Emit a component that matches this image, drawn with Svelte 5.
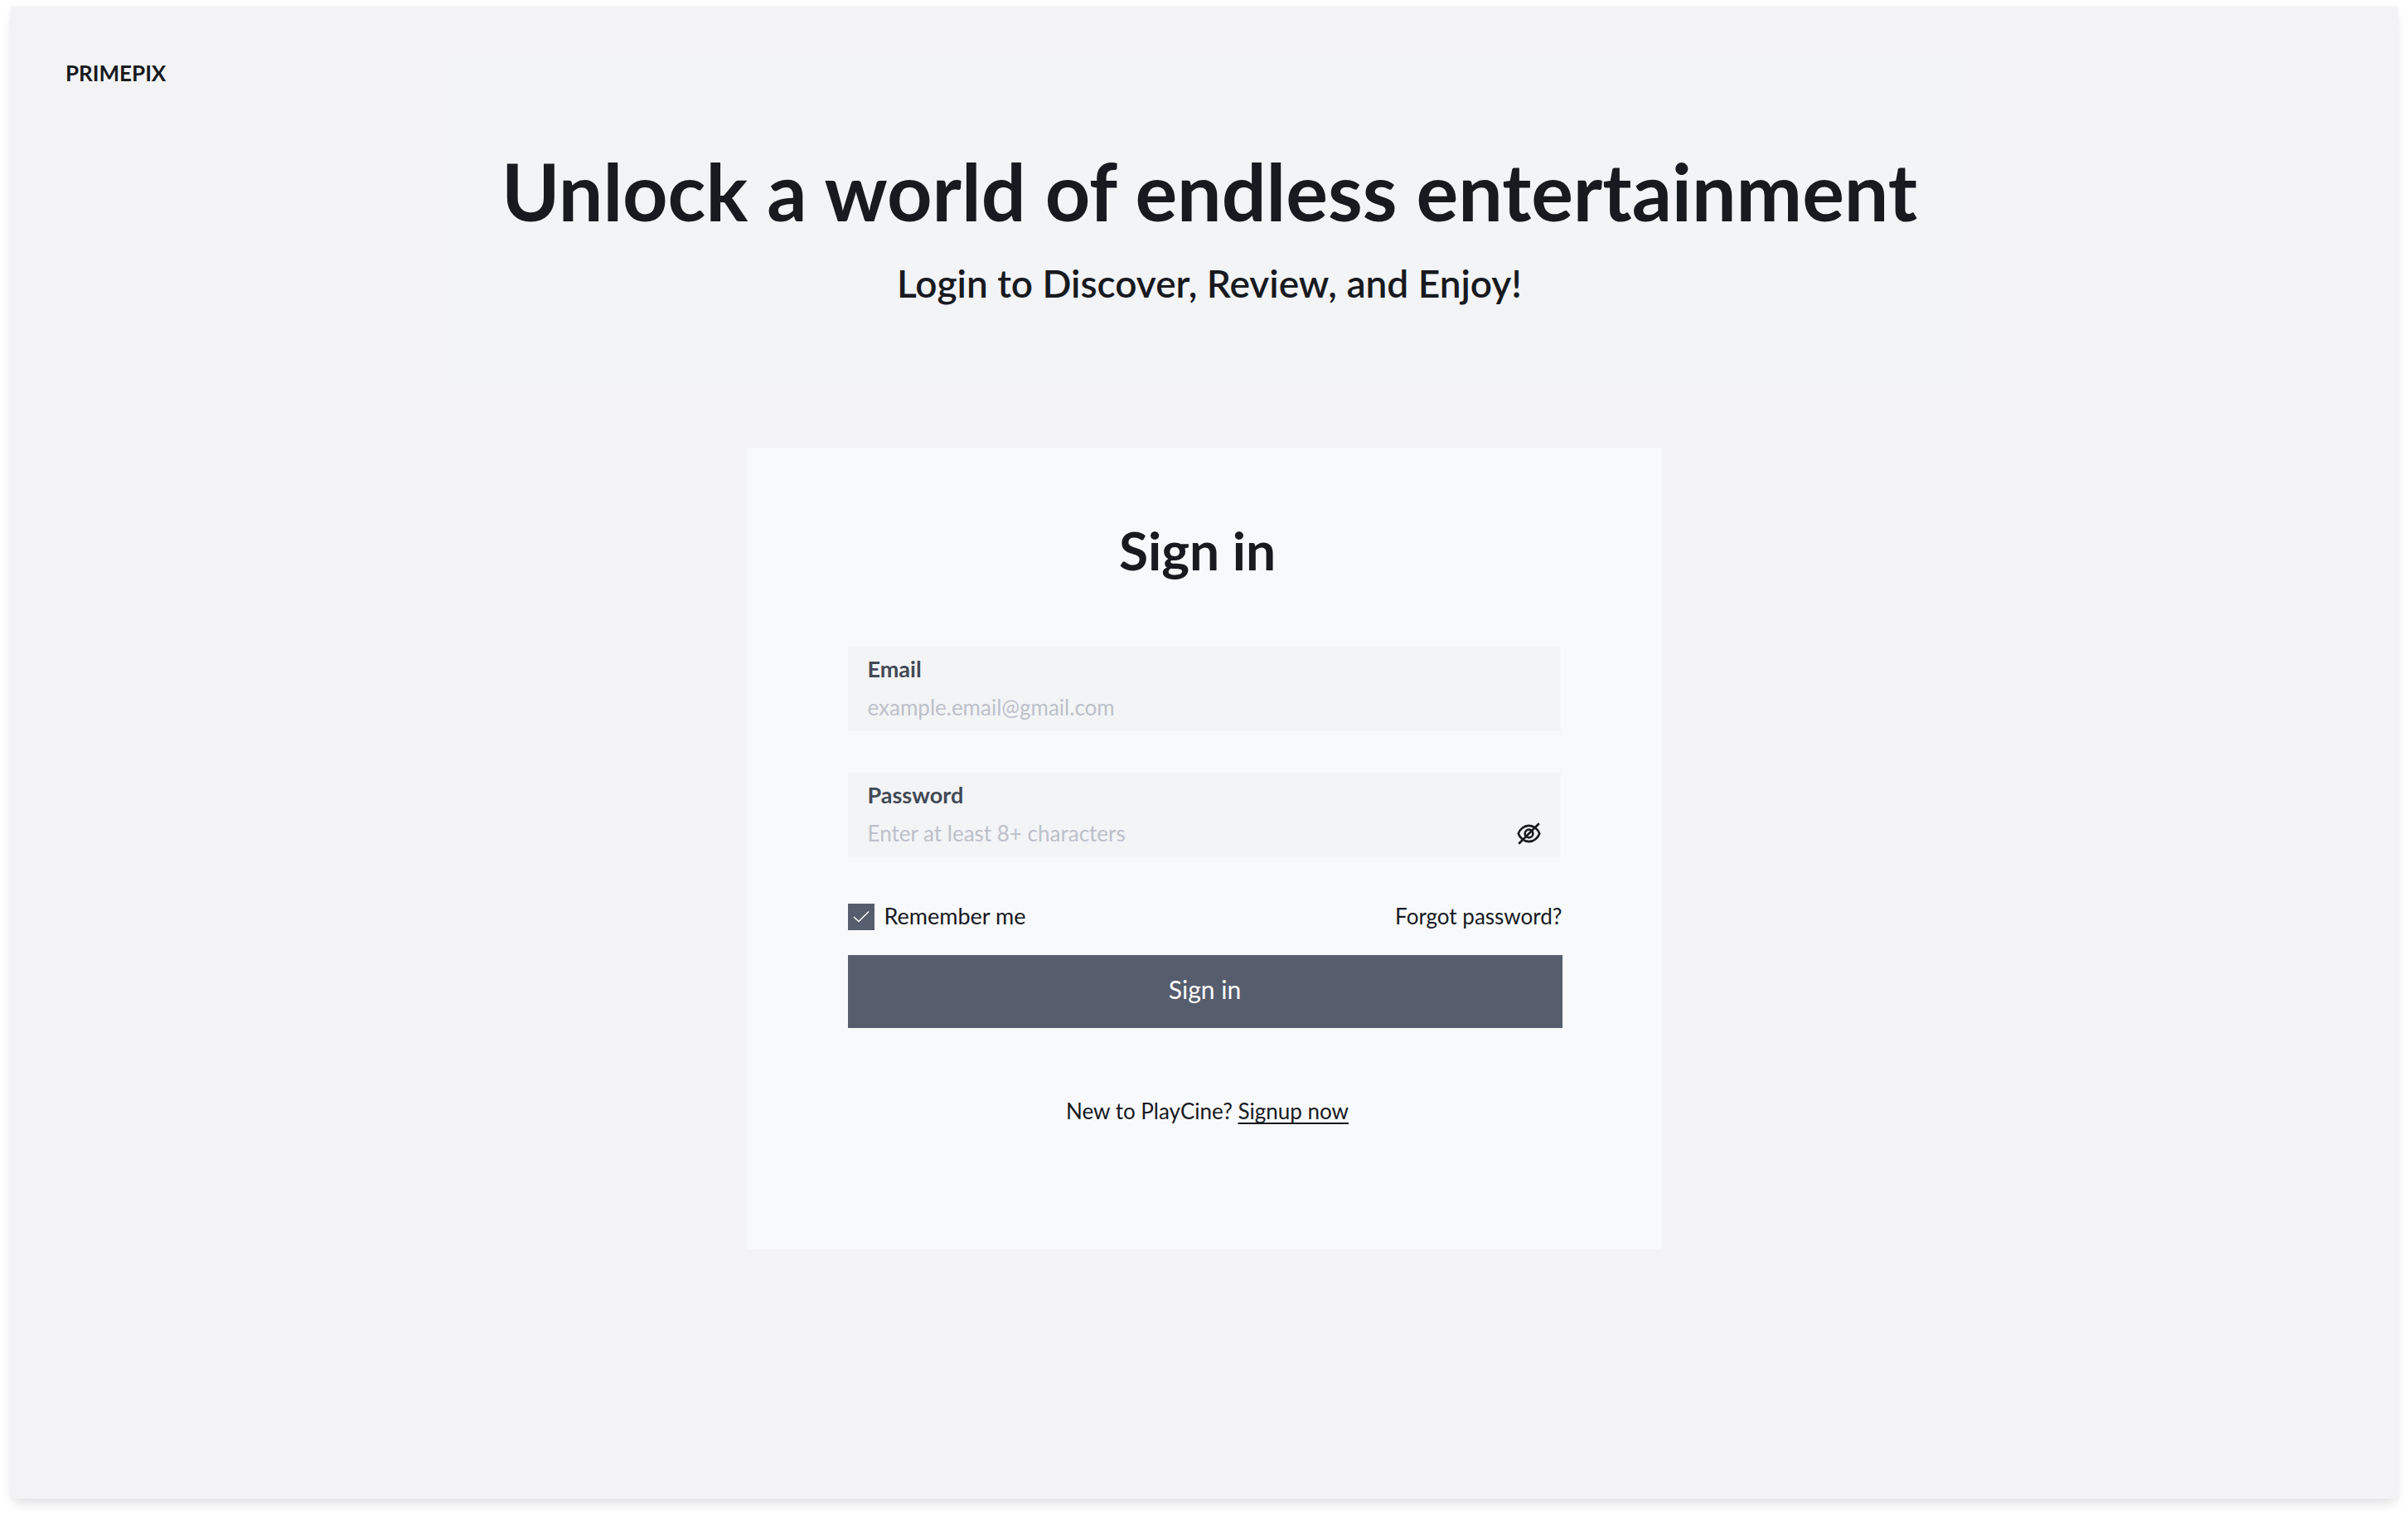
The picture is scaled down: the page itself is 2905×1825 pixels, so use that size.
<script>
  let email = $state('');
  let password = $state('');
  let remember = $state(true);
  let visible = $state(false);
</script>

<div class="screen">
  <div class="page">
    <header class="top">
      <a class="brand" href="/">PRIMEPIX</a>
      <div class="hero">
        <h1>Unlock a world of endless entertainment</h1>
        <p>Login to Discover, Review, and Enjoy!</p>
      </div>
    </header>

    <main class="card">
      <h2>Sign in</h2>
      <form onsubmit={(event) => event.preventDefault()}>
        <div class="field">
          <label for="email">Email</label>
          <input id="email" type="email" placeholder="example.email@gmail.com" bind:value={email} />
        </div>

        <div class="field">
          <label for="password">Password</label>
          <div class="row">
            <input
              id="password"
              type={visible ? 'text' : 'password'}
              placeholder="Enter at least 8+ characters"
              bind:value={password}
            />
            <button class="toggle" type="button" aria-label="Show password" onclick={() => (visible = !visible)}>
              <svg viewBox="0 0 30 30" fill="none" stroke="currentColor" stroke-width="2.7">
                <path d="M1.800 15C3.500 10 9 5 15 5S26.500 10 28.200 15C26.500 20 21 25 15 25S3.500 20 1.800 15Z" stroke-linejoin="round" />
                <circle cx="15" cy="15" r="5" />
                <path d="M2.300 27.700 27.700 2.300" />
              </svg>
            </button>
          </div>
        </div>

        <div class="options">
          <label class="remember">
            <input type="checkbox" bind:checked={remember} />
            <svg class="tick" viewBox="0 0 32 32" fill="none" stroke="#fff" stroke-width="1.500">
              <path d="M7 16 13 21.500 25 9.500" />
            </svg>
            <span>Remember me</span>
          </label>
          <a href="/forgot">Forgot password?</a>
        </div>

        <button class="submit" type="submit">Sign in</button>
      </form>
      <p class="signup">New to PlayCine? <a href="/signup">Signup now</a></p>
    </main>
  </div>
</div>

<style>
  :global(body) {
    background: #fff;
  }

  .screen {
    display: grid;
    box-sizing: border-box;
    min-height: 100vh;
    padding: 8px 12px 17px 13px;
  }

  .page {
    display: flow-root;
    padding-bottom: 60px;
    background: #f3f3f5;
    box-shadow: 0 0 4px #171a1f0c, 0 8px 14px -4px #171a1f26;
    color: #171a1f;
    font-family: Lato, "Open Sans", sans-serif;
    font-size: 26px;
    line-height: 36px;
  }

  a {
    color: inherit;
    text-decoration: none;
  }

  h1,
  h2,
  p {
    margin: 0;
  }

  .top {
    display: grid;
    grid-template-columns: minmax(180px, 1fr) minmax(0, 1830px) minmax(0, 1fr);
    margin-top: 61px;
    padding-left: 6px;
  }

  .brand {
    padding: 1px 0 0 60px;
    font-weight: 700;
  }

  .hero {
    box-sizing: border-box;
    padding: 101px 0 94px 6px;
    background: #f3f4f6;
    text-align: center;
  }

  h1 {
    font-size: 95px;
    font-weight: 700;
    line-height: 120px;
  }

  .hero p {
    margin-top: 22px;
    font-size: 46px;
    font-weight: 600;
    line-height: 60px;
  }

  .card {
    box-sizing: border-box;
    max-width: 1103px;
    margin: 74px auto 0;
    padding: 82px 120px 149px 121px;
    background: #f8f9fb;
  }

  h2 {
    margin-right: 18px;
    font-size: 64px;
    font-weight: 700;
    line-height: 84px;
    text-align: center;
  }

  form {
    margin-top: 74px;
  }

  .field {
    display: flex;
    flex-direction: column;
    gap: 10px;
    box-sizing: border-box;
    height: 102px;
    margin: 0 2px 50px 0;
    padding: 9px 24px 11px;
    background: #f3f4f6;
  }

  .field label {
    color: #424955;
    font-size: 27px;
    font-weight: 700;
  }

  .field input {
    flex: 1;
    min-width: 0;
    height: 36px;
    padding: 0;
    border: 0;
    outline: 0;
    background: transparent;
    color: #171a1f;
    font: inherit;
  }

  .field input::placeholder {
    color: #bdc1ca;
    opacity: 1;
  }

  .row {
    display: flex;
    align-items: center;
  }

  .toggle {
    width: 29px;
    height: 29px;
    padding: 0;
    border: 0;
    background: transparent;
    color: #171a1f;
  }

  .toggle svg,
  .tick {
    display: block;
    width: 100%;
  }

  .options {
    display: flex;
    align-items: center;
    justify-content: space-between;
    margin-top: 54px;
  }

  .remember {
    display: grid;
    grid-template-columns: 32px auto;
    align-items: center;
    column-gap: 12px;
    font-size: 27px;
  }

  .remember input {
    appearance: none;
    grid-area: 1 / 1;
    width: 32px;
    height: 32px;
    margin: 0;
    background: #565d6d;
  }

  .tick {
    grid-area: 1 / 1;
    z-index: 1;
    pointer-events: none;
  }

  .remember input:not(:checked) + .tick {
    visibility: hidden;
  }

  .options span,
  .options a {
    padding-bottom: 2px;
    line-height: 34px;
  }

  .submit {
    display: block;
    width: 100%;
    height: 88px;
    margin-top: 28px;
    padding: 0 0 6px;
    border: 0;
    background: #565d6d;
    color: #fff;
    font: inherit;
    font-size: 30px;
  }

  .signup {
    margin: 82px 0 0 6px;
    text-align: center;
  }

  .signup a {
    text-decoration: underline;
    text-decoration-thickness: 2px;
    text-underline-offset: 4px;
    text-decoration-skip-ink: none;
  }
</style>
